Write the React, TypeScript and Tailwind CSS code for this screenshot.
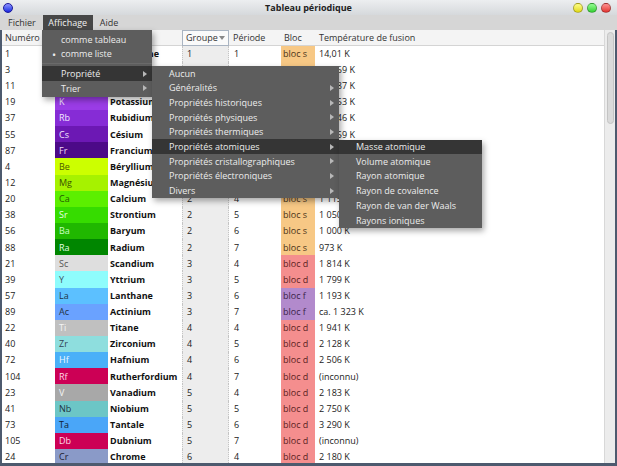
type Row = [number, string, string, number, number, string, string];

const rows: Row[] = [
  [1, "H", "Hydrogène", 1, 1, "s", "14,01 K"],
  [3, "Li", "Lithium", 1, 2, "s", "453,69 K"],
  [11, "Na", "Sodium", 1, 3, "s", "370,87 K"],
  [19, "K", "Potassium", 1, 4, "s", "336,53 K"],
  [37, "Rb", "Rubidium", 1, 5, "s", "312,46 K"],
  [55, "Cs", "Césium", 1, 6, "s", "301,59 K"],
  [87, "Fr", "Francium", 1, 7, "s", "300 K"],
  [4, "Be", "Béryllium", 2, 2, "s", "1 560 K"],
  [12, "Mg", "Magnésium", 2, 3, "s", "923 K"],
  [20, "Ca", "Calcium", 2, 4, "s", "1 115 K"],
  [38, "Sr", "Strontium", 2, 5, "s", "1 050 K"],
  [56, "Ba", "Baryum", 2, 6, "s", "1 000 K"],
  [88, "Ra", "Radium", 2, 7, "s", "973 K"],
  [21, "Sc", "Scandium", 3, 4, "d", "1 814 K"],
  [39, "Y", "Yttrium", 3, 5, "d", "1 799 K"],
  [57, "La", "Lanthane", 3, 6, "f", "1 193 K"],
  [89, "Ac", "Actinium", 3, 7, "f", "ca. 1 323 K"],
  [22, "Ti", "Titane", 4, 4, "d", "1 941 K"],
  [40, "Zr", "Zirconium", 4, 5, "d", "2 128 K"],
  [72, "Hf", "Hafnium", 4, 6, "d", "2 506 K"],
  [104, "Rf", "Rutherfordium", 4, 7, "d", "(inconnu)"],
  [23, "V", "Vanadium", 5, 4, "d", "2 183 K"],
  [41, "Nb", "Niobium", 5, 5, "d", "2 750 K"],
  [73, "Ta", "Tantale", 5, 6, "d", "3 290 K"],
  [105, "Db", "Dubnium", 5, 7, "d", "(inconnu)"],
  [24, "Cr", "Chrome", 6, 4, "d", "2 180 K"],
];

// symbol cell classes (background + text)
const symbolStyle: Record<string, string> = {
  H: "bg-[#ffffff] text-[#444]",
  Li: "bg-[#b44cf0] text-[#f4eaff]",
  Na: "bg-[#a845ea] text-[#f4eaff]",
  K: "bg-[#9a3ce6] text-[#f2e6ff]",
  Rb: "bg-[#862cd6] text-[#f2e6ff]",
  Cs: "bg-[#6c18b4] text-[#f2e6ff]",
  Fr: "bg-[#4c0a88] text-[#eed8f6]",
  Be: "bg-[#ccff00] text-[#4a5a00]",
  Mg: "bg-[#a6f200] text-[#3a5200]",
  Ca: "bg-[#5cef00] text-[#245a00]",
  Sr: "bg-[#36dc00] text-[#e6ffe0]",
  Ba: "bg-[#20b800] text-[#c8ffc0]",
  Ra: "bg-[#008600] text-[#e0ffe0]",
  Sc: "bg-[#dedede] text-[#555]",
  Y: "bg-[#8efcfc] text-[#456]",
  La: "bg-[#5cc0ff] text-[#234]",
  Ac: "bg-[#6aa2ff] text-[#234]",
  Ti: "bg-[#c0c0c0] text-[#f4f4f4]",
  Zr: "bg-[#8edede] text-[#345]",
  Hf: "bg-[#4ab0f8] text-[#f0f8ff]",
  Rf: "bg-[#cc0055] text-[#ffd8e6]",
  V: "bg-[#a8a8a8] text-[#f4f4f4]",
  Nb: "bg-[#6cc6c6] text-[#234]",
  Ta: "bg-[#4aa6f8] text-[#123]",
  Db: "bg-[#cc0055] text-[#ffd8e6]",
  Cr: "bg-[#8a9ac8] text-[#223]",
};

const blocStyle: Record<string, string> = {
  s: "bg-[#f7c885] text-[#4a3418]",
  d: "bg-[#f48e8e] text-[#5a1e1e]",
  f: "bg-[#b28acc] text-[#3a2448]",
};

const cols = "grid grid-cols-[53px_53px_74px_47px_52px_34px_1fr]";

function Arrow() {
  return (
    <svg width="4" height="6" viewBox="0 0 4 6" className="shrink-0">
      <path d="M0 0 L4 3 L0 6 Z" fill="#b8b8b8" />
    </svg>
  );
}

function MenuItem({
  label,
  active,
  sub,
  pl,
  bullet,
}: {
  label: string;
  active?: boolean;
  sub?: boolean;
  pl: string;
  bullet?: boolean;
}) {
  return (
    <div
      className={`relative flex h-[14.7px] items-center justify-between pr-[5px] ${pl} ${
        active ? "bg-[#353535]" : ""
      }`}
    >
      {bullet && (
        <span className="absolute left-[10px] text-[11px] leading-none">•</span>
      )}
      <span className="whitespace-nowrap">{label}</span>
      {sub && <Arrow />}
    </div>
  );
}

function Dot({ color }: { color: string }) {
  return (
    <div
      className={`h-[10px] w-[10px] rounded-full border border-black/30 ${color}`}
    />
  );
}

export default function App() {
  return (
    <div className="relative flex h-[466px] w-[617px] flex-col overflow-hidden bg-[#dcdcdc] font-['Open_Sans',sans-serif] text-[9px] text-[#222]">
      {/* Title bar */}
      <div className="grid h-[15px] grid-cols-[60px_1fr_60px] items-center bg-gradient-to-b from-[#eceef0] to-[#d6d9dc] px-[2px]">
        <div className="pl-[1px]">
          <div className="h-[10px] w-[10px] rounded-full border border-[#1a1a9a] bg-gradient-to-b from-[#9090ff] to-[#2020e0]" />
        </div>
        <div className="text-center font-bold text-[#222]">Tableau périodique</div>
        <div className="flex justify-end gap-[4px] pr-[4px]">
          <Dot color="bg-gradient-to-b from-[#ffff80] to-[#e0d800]" />
          <Dot color="bg-gradient-to-b from-[#90ff90] to-[#30d030]" />
          <Dot color="bg-gradient-to-b from-[#ff9090] to-[#e03030]" />
        </div>
      </div>

      {/* Menu bar */}
      <div className="flex h-[15px] items-stretch bg-[#d6d6d6] text-[#333]">
        <div className="flex items-center pl-[8px] pr-[7px]">Fichier</div>
        <div className="flex w-[50px] items-center justify-center bg-[#474747] text-[#f0f0f0]">
          Affichage
        </div>
        <div className="flex items-center pl-[7px]">Aide</div>
      </div>

      {/* Window content */}
      <div className="flex min-h-0 flex-1 border-b-[3px] border-l-2 border-r-2 border-[#4d5a6e]">
        <div className="flex min-w-0 flex-1 flex-col bg-white">
          {/* Header */}
          <div className={`${cols} h-[15.5px] shrink-0 border-b border-[#d4d4d4] bg-[#f4f4f4] text-[#333]`}>
            <div className="flex items-center pl-[3px]">Numéro</div>
            <div />
            <div />
            <div className="flex items-center justify-between border border-[#a9b4c2] bg-[#fafafa] pl-[3px] pr-[3px]">
              <span>Groupe</span>
              <svg width="6" height="4" viewBox="0 0 6 4">
                <path d="M0 0 L6 0 L3 4 Z" fill="#888" />
              </svg>
            </div>
            <div className="flex items-center pl-[4px]">Période</div>
            <div className="flex items-center pl-[3px]">Bloc</div>
            <div className="flex items-center pl-[4px]">Température de fusion</div>
          </div>

          {/* Body */}
          <div className="min-h-0 flex-1 overflow-hidden">
            {rows.map(([num, sym, name, grp, per, bloc, temp]) => (
              <div key={num} className={`${cols} h-[16.15px]`}>
                <div className="flex items-center pl-[3px]">{num}</div>
                <div className={`flex items-center pl-[4px] ${symbolStyle[sym]}`}>{sym}</div>
                <div className="flex items-center overflow-hidden whitespace-nowrap pl-[2px] font-bold text-[#111]">
                  {name}
                </div>
                <div className="flex items-center border-x border-dotted border-[#c4c4c4] bg-[#ededed] pl-[4px]">
                  {grp}
                </div>
                <div className="flex items-center pl-[5px]">{per}</div>
                <div className={`flex items-center whitespace-nowrap pl-[2px] ${blocStyle[bloc]}`}>
                  bloc {bloc}
                </div>
                <div className="flex items-center whitespace-nowrap pl-[4px]">{temp}</div>
              </div>
            ))}
          </div>
        </div>

        {/* Scrollbar */}
        <div className="w-[11px] shrink-0 border-l border-[#d8d8d8] bg-[#ececec] pl-[2px] pt-[2px]">
          <div className="h-[92px] w-[7px] rounded-full border border-[#c4c4c4] bg-[#dadada]" />
        </div>
      </div>

      {/* Affichage menu */}
      <div className="absolute left-[42px] top-[30px] w-[110px] bg-[#5d5d5d] pb-[1px] pt-[2px] text-[#ececec] shadow-[2px_3px_6px_rgba(0,0,0,0.35)]">
        <MenuItem label="comme tableau" pl="pl-[19px]" />
        <MenuItem label="comme liste" pl="pl-[19px]" bullet />
        <div className="my-[2px] h-px bg-[#6a6a6a]" />
        <MenuItem label="Propriété" pl="pl-[19px]" active sub />
        <MenuItem label="Trier" pl="pl-[19px]" sub />
      </div>

      {/* Propriété submenu */}
      <div className="absolute left-[152px] top-[66px] w-[187px] bg-[#5d5d5d] text-[#ececec] shadow-[2px_3px_6px_rgba(0,0,0,0.35)]">
        <MenuItem label="Aucun" pl="pl-[17px]" />
        <MenuItem label="Généralités" pl="pl-[17px]" sub />
        <MenuItem label="Propriétés historiques" pl="pl-[17px]" sub />
        <MenuItem label="Propriétés physiques" pl="pl-[17px]" sub />
        <MenuItem label="Propriétés thermiques" pl="pl-[17px]" sub />
        <MenuItem label="Propriétés atomiques" pl="pl-[17px]" active sub />
        <MenuItem label="Propriétés cristallographiques" pl="pl-[17px]" sub />
        <MenuItem label="Propriétés électroniques" pl="pl-[17px]" sub />
        <MenuItem label="Divers" pl="pl-[17px]" sub />
      </div>

      {/* Propriétés atomiques submenu */}
      <div className="absolute left-[339px] top-[139.5px] w-[143px] bg-[#5d5d5d] text-[#ececec] shadow-[2px_3px_6px_rgba(0,0,0,0.35)]">
        <MenuItem label="Masse atomique" pl="pl-[17px]" active />
        <MenuItem label="Volume atomique" pl="pl-[17px]" />
        <MenuItem label="Rayon atomique" pl="pl-[17px]" />
        <MenuItem label="Rayon de covalence" pl="pl-[17px]" />
        <MenuItem label="Rayon de van der Waals" pl="pl-[17px]" />
        <MenuItem label="Rayons ioniques" pl="pl-[17px]" />
      </div>
    </div>
  );
}
